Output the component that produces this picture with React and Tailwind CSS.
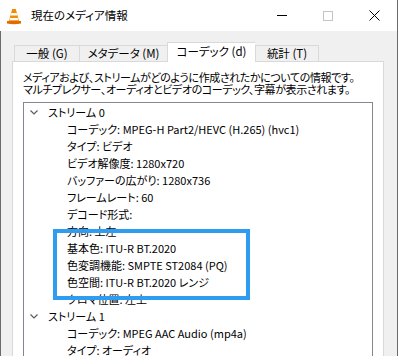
import React from "react";

const F = "font-['Noto_Sans_CJK_JP',sans-serif] [font-feature-settings:'palt']";

function VlcIcon() {
  return (
    <svg width="16" height="17" viewBox="0 0 16 17">
      <path d="M6.2 1 L9.8 1 L13 13 L3 13 Z" fill="#f48b00" />
      <path d="M5.4 5 L10.6 5 L11.3 7.6 L4.7 7.6 Z" fill="#ffffff" />
      <path d="M4.2 10 L11.8 10 L12.4 12.2 L3.6 12.2 Z" fill="#ffffff" />
      <path d="M1 13 L15 13 L15 15.5 Q8 17 1 15.5 Z" fill="#e26b00" />
    </svg>
  );
}

function Chevron() {
  return (
    <svg width="8" height="5" viewBox="0 0 8 5" className="block">
      <polyline points="0.5,0.5 4,4 7.5,0.5" fill="none" stroke="#5c5c5c" strokeWidth="1.2" />
    </svg>
  );
}

function Row({ children }) {
  return <div className="h-[17px] flex items-center pl-[43px] whitespace-nowrap">{children}</div>;
}

function StreamHead({ label }) {
  return (
    <div className="h-[17px] flex items-center whitespace-nowrap">
      <div className="w-[24px] pl-[6px] flex items-center"><Chevron /></div>
      <span>{label}</span>
    </div>
  );
}

export default function App() {
  const s0 = [
    "コーデック: MPEG-H Part2/HEVC (H.265) (hvc1)",
    "タイプ: ビデオ",
    "ビデオ解像度: 1280x720",
    "バッファーの広がり: 1280x736",
    "フレームレート: 60",
    "デコード形式:",
    "方向: 上左",
    "基本色: ITU-R BT.2020",
    "色変調機能: SMPTE ST2084 (PQ)",
    "色空間: ITU-R BT.2020 レンジ",
    "クロマ位置: 左上",
  ];
  const s1 = ["コーデック: MPEG AAC Audio (mp4a)", "タイプ: オーディオ"];
  return (
    <div className={`relative w-[398px] h-[356px] overflow-hidden bg-white border-r border-[#6b6b6b] text-[11px] text-black ${F}`}>
      {/* title bar */}
      <div className="h-[31px] flex items-center bg-white">
        <div className="pl-[6px] pt-[1px]"><VlcIcon /></div>
        <div className="ml-[9px] text-[11.5px] leading-none">現在のメディア情報</div>
        <div className="ml-auto flex h-full">
          <div className="w-[46px] h-full flex items-center justify-center">
            <div className="w-[10px] h-[1px] bg-black" />
          </div>
          <div className="w-[46px] h-full flex items-center justify-center">
            <div className="w-[10px] h-[10px] border border-[#c4c4c4]" />
          </div>
          <div className="w-[46px] h-full flex items-center justify-center">
            <svg width="11" height="11" viewBox="0 0 11 11">
              <path d="M0.5 0.5 L10.5 10.5 M10.5 0.5 L0.5 10.5" stroke="#000" strokeWidth="1" />
            </svg>
          </div>
        </div>
      </div>
      {/* body */}
      <div className="h-[325px] bg-[#f0f0f0] border-l border-[#6b6b6b] pl-[11px] pt-[11px]">
        <div className="h-[19px] flex items-end pl-[2px] text-[11.5px]">
          <div className="w-[65px] h-[16px] border-l border-t border-[#d9d9d9] bg-[#f0f0f0] flex items-center justify-center leading-none">一般 (G)</div>
          <div className="w-[88px] h-[16px] border-l border-t border-[#d9d9d9] bg-[#f0f0f0] flex items-center justify-center leading-none">メタデータ (M)</div>
          <div className="relative z-10 w-[88px] h-[20px] mb-[-1px] border-l border-t border-[#d9d9d9] bg-white flex items-center justify-center leading-none pb-[1px]">コーデック (d)</div>
          <div className="w-[64px] h-[16px] border-l border-t border-r border-[#d9d9d9] bg-[#f0f0f0] flex items-center justify-center leading-none">統計 (T)</div>
        </div>
        <div className="w-[372px] h-[310px] bg-white border border-[#d9d9d9] pl-[10px] pt-[9px]">
          <div className="leading-[12px] whitespace-nowrap tracking-[-0.4px]">
            <div>メディアおよび、ストリームがどのように作成されたかについての情報です。</div>
            <div>マルチプレクサー、オーディオとビデオのコーデック、字幕が表示されます。</div>
          </div>
          <div className="mt-[7px] w-[350px] h-[260px] border border-[#828790] pt-[1px]">
            <StreamHead label="ストリーム 0" />
            {s0.map((t) => <Row key={t}>{t}</Row>)}
            <StreamHead label="ストリーム 1" />
            {s1.map((t) => <Row key={t}>{t}</Row>)}
          </div>
        </div>
      </div>
      {/* annotation */}
      <div className="absolute left-[53px] top-[229px] w-[197px] h-[71px] border-[4px] border-[#2e9cf0]" />
    </div>
  );
}
